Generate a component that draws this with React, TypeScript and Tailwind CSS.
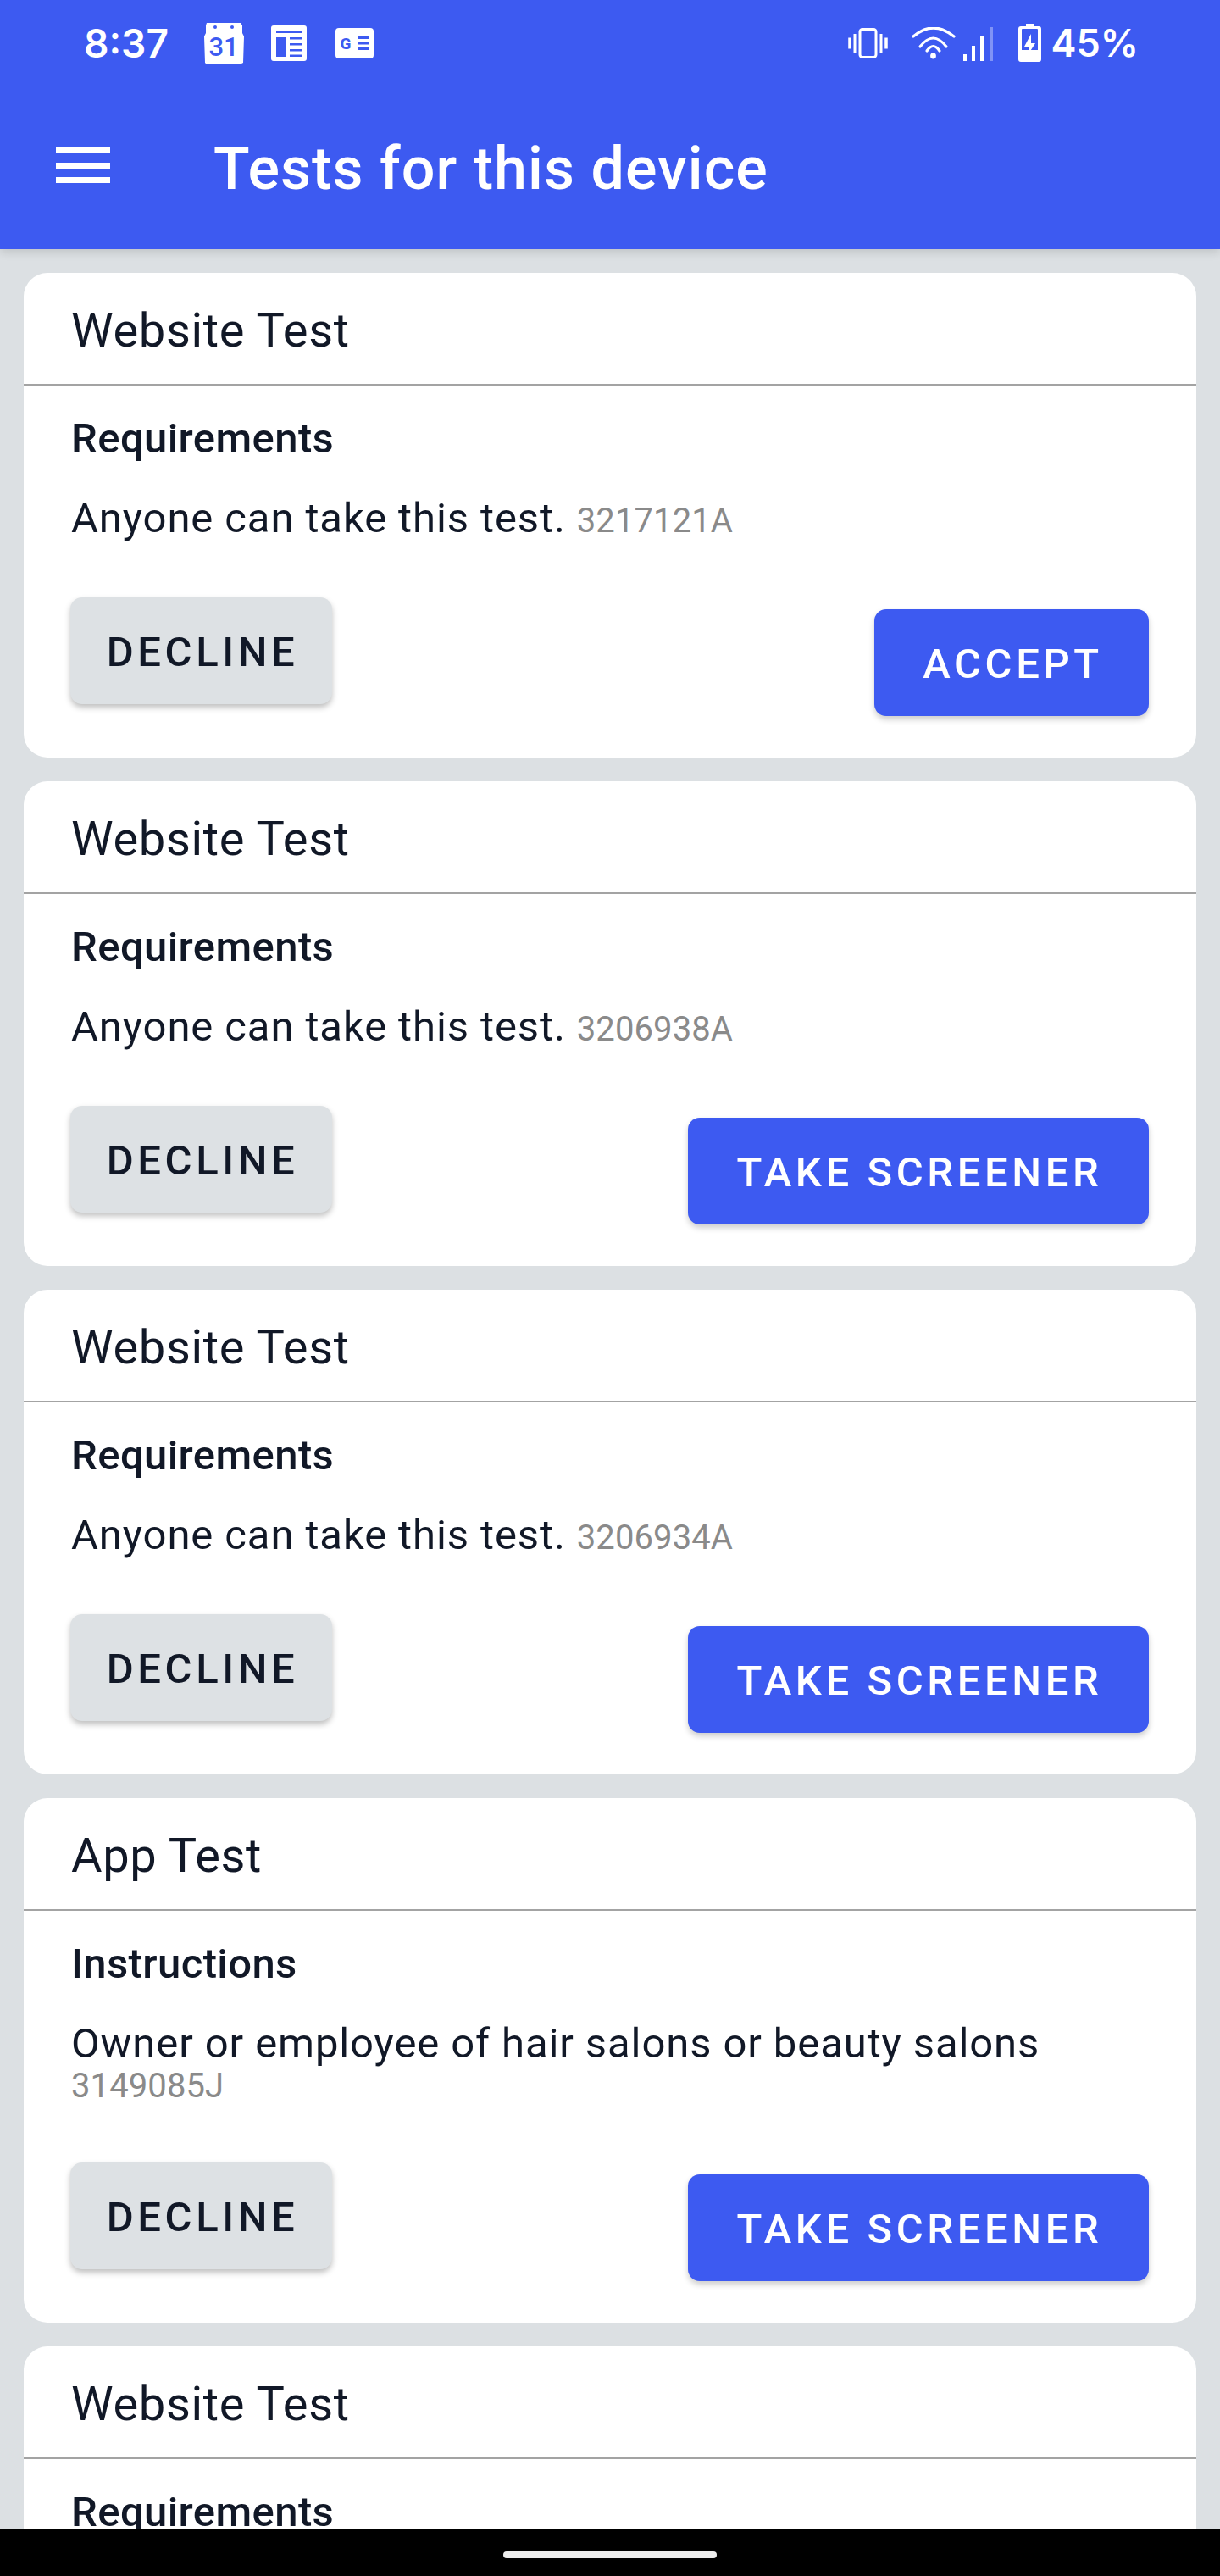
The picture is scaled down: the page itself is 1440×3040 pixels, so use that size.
const BLUE = "#3d5af1";

type TestCard = {
  title: string;
  heading: string;
  text: string;
  id: string;
  action: string;
};

const tests: TestCard[] = [
  { title: "Website Test", heading: "Requirements", text: "Anyone can take this test.", id: "3217121A", action: "ACCEPT" },
  { title: "Website Test", heading: "Requirements", text: "Anyone can take this test.", id: "3206938A", action: "TAKE SCREENER" },
  { title: "Website Test", heading: "Requirements", text: "Anyone can take this test.", id: "3206934A", action: "TAKE SCREENER" },
  {
    title: "App Test",
    heading: "Instructions",
    text: "Owner or employee of hair salons or beauty salons",
    id: "3149085J",
    action: "TAKE SCREENER",
  },
];

function CalendarIcon() {
  return (
    <svg width="48" height="50" viewBox="0 0 48 50">
      <path d="M4 1h40l2 3v9l2 4-1 31-2 1H3l-1-1-1-31 2-4V4z" fill="white" />
      <circle cx="14" cy="6" r="2" fill={BLUE} />
      <circle cx="34" cy="6" r="2" fill={BLUE} />
      <text x="24" y="40" textAnchor="middle" fontSize="31" fontWeight="500" fontFamily="Roboto, sans-serif" fill={BLUE}>
        31
      </text>
    </svg>
  );
}

function TableIcon() {
  return (
    <svg width="42" height="42" viewBox="0 0 42 42">
      <rect width="42" height="42" rx="3" fill="white" />
      <rect x="6" y="6" width="30" height="3" fill={BLUE} />
      <rect x="6" y="14" width="12" height="23" fill={BLUE} />
      <rect x="22" y="14" width="14" height="2.5" fill={BLUE} />
      <rect x="22" y="21" width="14" height="2.5" fill={BLUE} />
      <rect x="22" y="28" width="14" height="2.5" fill={BLUE} />
      <rect x="22" y="34.5" width="14" height="2.5" fill={BLUE} />
    </svg>
  );
}

function NewsIcon() {
  return (
    <svg width="45" height="36" viewBox="0 0 45 36">
      <rect width="45" height="36" rx="4" fill="white" />
      <text x="12" y="25" textAnchor="middle" fontSize="19" fontWeight="700" fontFamily="Roboto, sans-serif" fill={BLUE}>
        G
      </text>
      <rect x="26" y="10" width="14" height="3" fill={BLUE} />
      <rect x="26" y="16.5" width="14" height="3" fill={BLUE} />
      <rect x="26" y="23" width="14" height="3" fill={BLUE} />
    </svg>
  );
}

function VibrateIcon() {
  return (
    <svg width="47" height="36" viewBox="0 0 47 36" fill="none" stroke="white">
      <rect x="14" y="1.5" width="19" height="33" rx="3" strokeWidth="3" />
      <path d="M8 7v22M39 7v22" strokeWidth="3" />
      <path d="M2 11.5v13M45 11.5v13" strokeWidth="3.5" />
    </svg>
  );
}

function WifiIcon() {
  return (
    <svg width="52" height="38" viewBox="0 0 52 38" fill="none" stroke="white" strokeWidth="3.2" strokeLinecap="round">
      <path d="M2 11Q25.5 -9 50 11" />
      <path d="M10 23Q25.5 3 41 23" />
      <path d="M18 28Q25.5 17 33 28" />
      <circle cx="25.5" cy="34" r="3.4" fill="white" stroke="none" />
    </svg>
  );
}

function SignalIcon() {
  return (
    <svg width="35" height="40" viewBox="0 0 35 40">
      <rect x="0" y="32" width="4" height="8" fill="white" />
      <rect x="10" y="22" width="4" height="18" fill="white" />
      <rect x="20" y="10.5" width="4" height="29.5" fill="white" />
      <rect x="31" y="0" width="4" height="40" fill="white" fillOpacity="0.35" />
    </svg>
  );
}

function BatteryIcon() {
  return (
    <svg width="27" height="45" viewBox="0 0 27 45">
      <path d="M9 0h10v3h5a3 3 0 0 1 3 3v36a3 3 0 0 1-3 3H3a3 3 0 0 1-3-3V6a3 3 0 0 1 3-3h6z" fill="white" />
      <path d="M4 7a1 1 0 0 1 1-1h17a1 1 0 0 1 1 1v24H4z" fill={BLUE} />
      <path d="M15 12l-8 15h6l-2 10 9-14h-5z" fill="white" />
    </svg>
  );
}

function StatusBar() {
  return (
    <div className="flex h-[104px] items-center pr-[96px] pl-[99px] pb-[3px] font-[Inter,sans-serif] text-white">
      <span className="w-[101px] text-[46px] leading-none font-semibold">8:37</span>
      <div className="ml-[40px] flex items-center">
        <CalendarIcon />
        <div className="ml-[32px]">
          <TableIcon />
        </div>
        <div className="ml-[34px]">
          <NewsIcon />
        </div>
      </div>
      <div className="ml-auto flex items-center">
        <VibrateIcon />
        <div className="ml-[28px]">
          <WifiIcon />
        </div>
        <div className="ml-[9px] mt-[3px]">
          <SignalIcon />
        </div>
        <div className="ml-[30px]">
          <BatteryIcon />
        </div>
        <span className="ml-[12px] text-[45px] leading-none font-semibold">45%</span>
      </div>
    </div>
  );
}

function Header() {
  return (
    <header className="relative z-10 h-[294px] shrink-0 bg-[#3d5af1] shadow-[0_4px_10px_rgba(0,0,0,0.12)]">
      <StatusBar />
      <div className="flex h-[190px] items-start pt-[61px]">
        <div className="ml-[66px] flex h-[60px] w-[64px] flex-col justify-between py-[9px]">
          <div className="h-[7px] bg-white" />
          <div className="h-[7px] bg-white" />
          <div className="h-[7px] bg-white" />
        </div>
        <h1 className="ml-[122px] -mt-[8px] text-[70px] leading-[84px] font-medium tracking-[1.05px] text-white">
          Tests for this device
        </h1>
      </div>
    </header>
  );
}

function CardTitle({ title }: { title: string }) {
  return (
    <>
      <div className="flex h-[131px] items-center px-[56px] pt-[4px] text-[56px] leading-none tracking-[0.65px]">
        {title}
      </div>
      <div className="h-[2px] bg-[#a3a3a3]" />
    </>
  );
}

function Card({ test }: { test: TestCard }) {
  return (
    <section className="rounded-[28px] bg-white text-[#111827]">
      <CardTitle title={test.title} />
      <div className="px-[56px] pb-[49px]">
        <h2 className="pt-[28px] text-[49px] leading-[70px] font-medium tracking-[0.4px]">{test.heading}</h2>
        <p className="mt-[35px] text-[49px] leading-[47px] tracking-[0.9px]">
          {test.text} <span className="text-[40px] leading-none tracking-[0.1px] text-[#8a8a8a]">{test.id}</span>
        </p>
        <div className="mt-[70px] flex items-start justify-between">
          <button className="-ml-[1px] h-[126px] w-[309px] rounded-[14px] bg-[#dde1e4] pt-[3px] pl-[3px] text-[49px] font-medium tracking-[4.6px] text-[#111827] shadow-[0_4px_7px_rgba(0,0,0,0.25)]">
            DECLINE
          </button>
          <button
            className={
              test.action === "ACCEPT"
                ? "mt-[14px] h-[126px] w-[324px] rounded-[14px] bg-[#3d5af1] pt-[3px] pl-[3px] text-[49px] font-medium tracking-[4.6px] text-white shadow-[0_4px_7px_rgba(0,0,0,0.2)]"
                : "mt-[14px] h-[126px] w-[544px] rounded-[14px] bg-[#3d5af1] pt-[3px] pl-[3px] text-[49px] font-medium tracking-[4.6px] text-white shadow-[0_4px_7px_rgba(0,0,0,0.2)]"
            }
          >
            {test.action}
          </button>
        </div>
      </div>
    </section>
  );
}

export default function App() {
  return (
    <div className="flex h-[3040px] w-[1440px] flex-col overflow-hidden bg-[#dce0e3] font-[Roboto,sans-serif]">
      <Header />
      <main className="flex min-h-0 flex-1 flex-col gap-[28px] overflow-hidden px-[28px] pt-[28px]">
        {tests.map((t) => (
          <Card key={t.id} test={t} />
        ))}
        <section className="shrink-0 rounded-t-[28px] bg-white text-[#111827]">
          <CardTitle title="Website Test" />
          <div className="px-[56px] pb-[49px]">
            <h2 className="pt-[28px] text-[49px] leading-[70px] font-medium tracking-[0.4px]">Requirements</h2>
          </div>
        </section>
      </main>
      <footer className="flex h-[56px] shrink-0 justify-center bg-black pt-[27px]">
        <div className="h-[8px] w-[252px] rounded-full bg-[#ececec]" />
      </footer>
    </div>
  );
}
